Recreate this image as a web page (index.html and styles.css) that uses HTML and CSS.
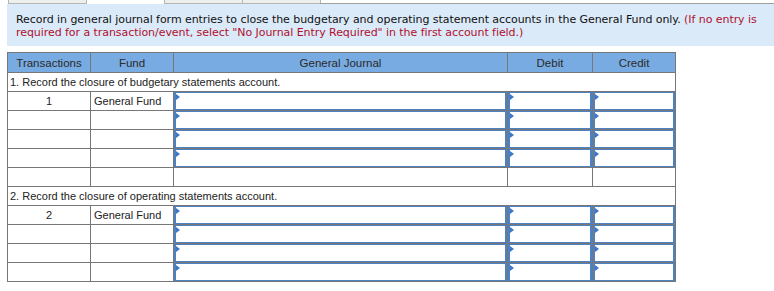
FILE: index.html
```html
<!DOCTYPE html>
<html>
<head>
<meta charset="utf-8">
<link rel="stylesheet" href="styles.css">
</head>
<body>
<div class="tabs">
  <div class="tab"></div>
  <div class="tab active"></div>
  <div class="tab"></div>
  <div class="tab"></div>
  <div class="tab-rest"></div>
</div>
<div class="info">
  Record in general journal form entries to close the budgetary and operating statement accounts in the General Fund only. <span class="note">(If no entry is required for a transaction/event, select "No Journal Entry Required" in the first account field.)</span>
</div>
<table class="journal">
  <colgroup>
    <col class="c-tr"><col class="c-fund"><col class="c-gj"><col class="c-dr"><col class="c-cr">
  </colgroup>
  <thead>
    <tr><th>Transactions</th><th>Fund</th><th>General Journal</th><th>Debit</th><th>Credit</th></tr>
  </thead>
  <tbody>
    <tr class="sec"><td colspan="5">1. Record the closure of budgetary statements account.</td></tr>
    <tr><td class="num">1</td><td class="fund">General Fund</td><td class="in"><div class="box"></div></td><td class="in"><div class="box"></div></td><td class="in"><div class="box"></div></td></tr>
    <tr><td></td><td></td><td class="in"><div class="box"></div></td><td class="in"><div class="box"></div></td><td class="in"><div class="box"></div></td></tr>
    <tr><td></td><td></td><td class="in"><div class="box"></div></td><td class="in"><div class="box"></div></td><td class="in"><div class="box"></div></td></tr>
    <tr><td></td><td></td><td class="in"><div class="box"></div></td><td class="in"><div class="box"></div></td><td class="in"><div class="box"></div></td></tr>
    <tr><td></td><td></td><td></td><td></td><td></td></tr>
    <tr class="sec"><td colspan="5">2. Record the closure of operating statements account.</td></tr>
    <tr><td class="num">2</td><td class="fund">General Fund</td><td class="in"><div class="box"></div></td><td class="in"><div class="box"></div></td><td class="in"><div class="box"></div></td></tr>
    <tr><td></td><td></td><td class="in"><div class="box"></div></td><td class="in"><div class="box"></div></td><td class="in"><div class="box"></div></td></tr>
    <tr><td></td><td></td><td class="in"><div class="box"></div></td><td class="in"><div class="box"></div></td><td class="in"><div class="box"></div></td></tr>
    <tr><td></td><td></td><td class="in"><div class="box"></div></td><td class="in"><div class="box"></div></td><td class="in"><div class="box"></div></td></tr>
  </tbody>
</table>
</body>
</html>
```
FILE: styles.css
```css
html, body { margin: 0; padding: 0; background: #fff; }
body { font-family: "Liberation Sans", Arial, sans-serif; }

.tabs { display: flex; height: 4px; padding-left: 8px; }
.tab { width: 79px; background: #eeeeee; border: 1px solid #b5b5b5; border-top: none; box-sizing: border-box; height: 4px; margin-right: -1px; }
.tab.active { background: #fff; border-bottom: none; border-right: none; }
.tab-rest { flex: 1; border-bottom: 1px solid #a0a0a0; box-sizing: border-box; height: 4px; }

.info {
  margin-left: 7px;
  background: #dbeaf8;
  padding: 9px 10px 0 9px;
  height: 33px;
  font-family: "DejaVu Sans", Verdana, sans-serif;
  font-size: 11px;
  line-height: 13px;
  color: #111;
  letter-spacing: -0.06px;
}
.note { color: #b0102e; }

.journal {
  margin: 6px 0 0 7px;
  border-collapse: collapse;
  table-layout: fixed;
  width: 668px;
  font-size: 11px;
  color: #222;
}
.c-tr { width: 83px; }
.c-fund { width: 83px; }
.c-gj { width: 334px; }
.c-dr { width: 85px; }
.c-cr { width: 83px; }

.journal th, .journal td { border: 1px solid #777; padding: 0; }
.journal th {
  background: #78abe2;
  height: 19px;
  font-weight: normal;
  font-size: 11.5px;
  color: #2a2a2a;
  text-align: center;
}
.journal td { height: 18px; }
.journal .sec td { padding-left: 2px; }
.journal td.num { text-align: center; }
.journal td.fund { padding-left: 3px; }
.journal td.in { padding: 0; position: relative; }
.box {
  height: 18px;
  box-sizing: border-box;
  border: 1px solid #4f80bf;
  border-left-width: 2px;
  border-right-width: 2px;
  position: relative;
}
.box::before {
  content: "";
  position: absolute;
  left: 0;
  top: 1px;
  border-left: 4px solid #3d78c8;
  border-top: 3px solid transparent;
  border-bottom: 3px solid transparent;
}
```
